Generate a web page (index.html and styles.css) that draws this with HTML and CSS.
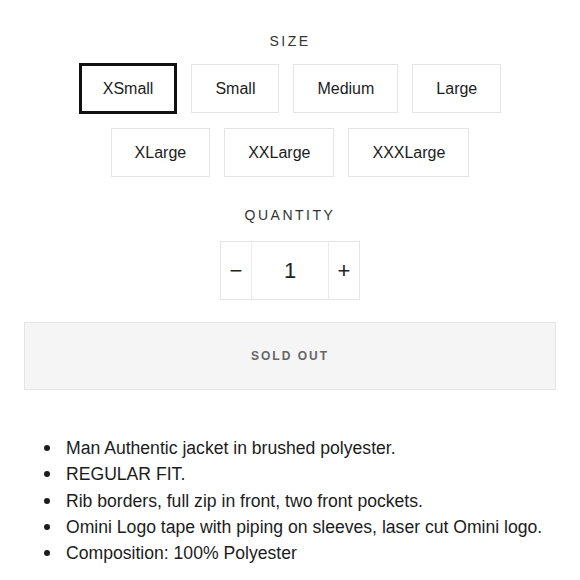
FILE: index.html
```html
<!DOCTYPE html>
<html>
<head>
<meta charset="utf-8">
<link rel="stylesheet" href="styles.css">
</head>
<body>
<div class="page">
  <div class="label label-size">SIZE</div>
  <div class="sizes">
    <div class="size selected">XSmall</div>
    <div class="size">Small</div>
    <div class="size">Medium</div>
    <div class="size">Large</div>
    <div class="size">XLarge</div>
    <div class="size">XXLarge</div>
    <div class="size">XXXLarge</div>
  </div>
  <div class="label label-qty">QUANTITY</div>
  <div class="qty">
    <div class="qty-btn">&minus;</div>
    <div class="qty-val">1</div>
    <div class="qty-btn">+</div>
  </div>
  <div class="soldout">SOLD OUT</div>
  <ul class="details">
    <li>Man Authentic jacket in brushed polyester.</li>
    <li>REGULAR FIT.</li>
    <li>Rib borders, full zip in front, two front pockets.</li>
    <li>Omini Logo tape with piping on sleeves, laser cut Omini logo.</li>
    <li>Composition: 100% Polyester</li>
  </ul>
</div>
</body>
</html>
```
FILE: styles.css
```css
html, body {
  margin: 0;
  padding: 0;
  background: #fff;
}
body {
  font-family: "Liberation Sans", Arial, sans-serif;
  color: #1c1c1c;
}
.page {
  padding: 31px 24px 0 24px;
  display: flex;
  flex-direction: column;
  align-items: center;
}
.label {
  font-size: 14px;
  letter-spacing: 2.5px;
  line-height: 20px;
  color: #333;
}
.sizes {
  margin-top: 13px;
  width: 440px;
  display: flex;
  flex-wrap: wrap;
  justify-content: center;
  column-gap: 14px;
  row-gap: 15px;
}
.size {
  height: 49px;
  box-sizing: border-box;
  padding: 0 23px;
  border: 1px solid #e4e4e4;
  display: flex;
  align-items: center;
  justify-content: center;
  font-size: 16px;
  color: #1c1c1c;
}
.size.selected {
  border: 3px solid #111;
  padding: 0 21px;
  height: 51px;
  margin-top: -1px;
  margin-bottom: -1px;
}
.label-qty {
  margin-top: 28px;
}
.qty {
  margin-top: 16px;
  display: flex;
  height: 59px;
  box-sizing: border-box;
  border: 1px solid #e4e4e4;
}
.qty-btn {
  width: 30px;
  display: flex;
  align-items: center;
  justify-content: center;
  font-size: 22px;
  color: #222;
}
.qty-val {
  width: 76px;
  border-left: 1px solid #ececec;
  border-right: 1px solid #ececec;
  display: flex;
  align-items: center;
  justify-content: center;
  font-size: 22px;
  color: #222;
}
.soldout {
  margin-top: 22px;
  align-self: stretch;
  height: 68px;
  box-sizing: border-box;
  background: #f5f5f5;
  border: 1px solid #e6e6e6;
  display: flex;
  align-items: center;
  justify-content: center;
  font-size: 12px;
  font-weight: bold;
  letter-spacing: 2px;
  color: #666;
}
.details {
  align-self: stretch;
  margin: 45px 0 0 0;
  padding: 0 0 0 42px;
  list-style: none;
  font-size: 17.6px;
  line-height: 26.3px;
  color: #1c1c1c;
}
.details li {
  position: relative;
}
.details li::before {
  content: "";
  position: absolute;
  left: -22px;
  top: 10px;
  width: 6px;
  height: 6px;
  border-radius: 50%;
  background: #1c1c1c;
}
```
